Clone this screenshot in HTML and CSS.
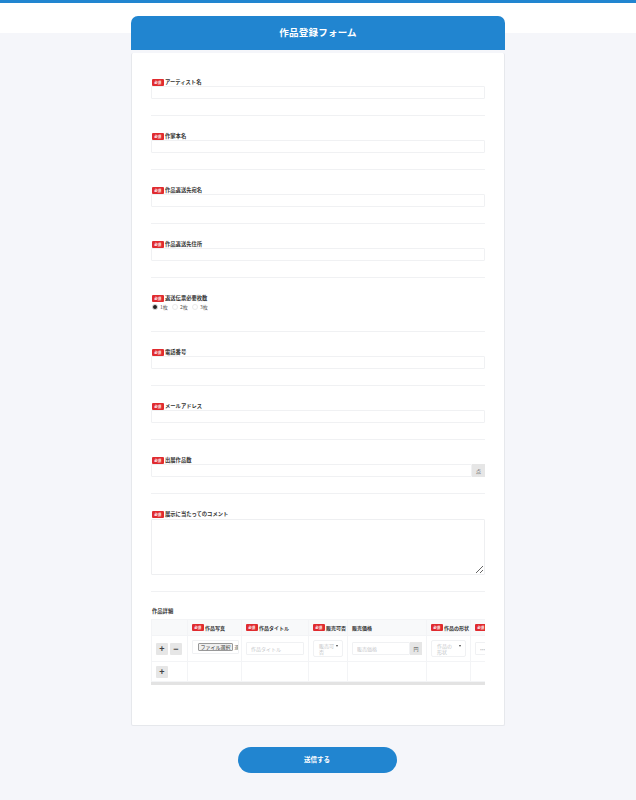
FILE: index.html
```html
<!DOCTYPE html>
<html lang="ja">
<head>
    <meta charset="UTF-8">
    <meta name="viewport" content="width=device-width, initial-scale=1.0">
    <title>作品登録フォーム</title>
    <link rel="stylesheet" href="styles.css">
</head>
<body>
    <div class="container">
        <h1 class="form-title">作品登録フォーム</h1>

        <form class="form-card">
            <div class="field">
                <label class="field-label"><span class="required">必須</span>アーティスト名</label>
                <input class="text-input" type="text">
            </div>
            <div class="field">
                <label class="field-label"><span class="required">必須</span>作家本名</label>
                <input class="text-input" type="text">
            </div>
            <div class="field">
                <label class="field-label"><span class="required">必須</span>作品返送先宛名</label>
                <input class="text-input" type="text">
            </div>
            <div class="field">
                <label class="field-label"><span class="required">必須</span>作品返送先住所</label>
                <input class="text-input" type="text">
            </div>
            <div class="field">
                <label class="field-label"><span class="required">必須</span>返送伝票必要枚数</label>
                <div class="radio-row">
                    <span class="radio-item"><span class="radio checked"></span>1枚</span>
                    <span class="radio-item"><span class="radio"></span>2枚</span>
                    <span class="radio-item"><span class="radio"></span>3枚</span>
                </div>
            </div>
            <div class="field">
                <label class="field-label"><span class="required">必須</span>電話番号</label>
                <input class="text-input" type="text">
            </div>
            <div class="field">
                <label class="field-label"><span class="required">必須</span>メールアドレス</label>
                <input class="text-input" type="text">
            </div>
            <div class="field">
                <label class="field-label"><span class="required">必須</span>出展作品数</label>
                <div class="input-group">
                    <input class="text-input" type="text">
                    <span class="unit">点</span>
                </div>
            </div>
            <div class="field field-tall">
                <label class="field-label"><span class="required">必須</span>展示に当たってのコメント</label>
                <textarea class="text-area"></textarea>
            </div>

            <div class="details">
                <div class="details-title">作品詳細</div>
                <div class="table-wrap">
                    <table class="details-table">
                        <colgroup>
                            <col class="col-ops">
                            <col class="col-photo">
                            <col class="col-title">
                            <col class="col-sale">
                            <col class="col-price">
                            <col class="col-shape">
                            <col class="col-extra">
                        </colgroup>
                        <thead>
                            <tr>
                                <th></th>
                                <th><span class="required">必須</span>作品写真</th>
                                <th><span class="required">必須</span>作品タイトル</th>
                                <th><span class="required">必須</span>販売可否</th>
                                <th>販売価格</th>
                                <th><span class="required">必須</span>作品の形状</th>
                                <th><span class="required">必須</span></th>
                            </tr>
                        </thead>
                        <tbody>
                            <tr class="item-row">
                                <td>
                                    <div class="row-buttons">
                                        <button class="icon-button" type="button">+</button>
                                        <button class="icon-button" type="button">−</button>
                                    </div>
                                </td>
                                <td>
                                    <div class="file-box"><span class="file-button">ファイル選択</span><span class="file-text">選</span></div>
                                </td>
                                <td><input class="cell-input" type="text" placeholder="作品タイトル"></td>
                                <td><div class="cell-select"><span>販売可否</span><i class="caret"></i></div></td>
                                <td>
                                    <div class="price-group">
                                        <input class="cell-input" type="text" placeholder="販売価格">
                                        <span class="price-unit">円</span>
                                    </div>
                                </td>
                                <td><div class="cell-select"><span>作品の形状</span><i class="caret"></i></div></td>
                                <td><input class="cell-input" type="text" placeholder="•••"></td>
                            </tr>
                            <tr class="add-row">
                                <td><button class="icon-button" type="button">+</button></td>
                                <td></td>
                                <td></td>
                                <td></td>
                                <td></td>
                                <td></td>
                                <td></td>
                            </tr>
                        </tbody>
                    </table>
                    <div class="scroll-track"></div>
                </div>
            </div>
        </form>

        <div class="submit-row">
            <button class="submit-button" type="button">送信する</button>
        </div>
    </div>
</body>
</html>
```

FILE: styles.css
```css
:root {
    --primary-color: #2185d0;
    --background: #f5f6fa;
    --border-color: #f0f1f3;
    --required-color: #e02b2f;
    --text-primary: #333;
    --text-muted: #c4c6c9;
    --unit-background: #e6e6e6;
}

* {
    box-sizing: border-box;
}

html, body {
    height: 100%;
}

body {
    margin: 0;
    border-top: 3px solid var(--primary-color);
    background: linear-gradient(#fff 33px, var(--background) 33px);
    color: var(--text-primary);
    font-family: "Noto Sans CJK JP", "Noto Sans", sans-serif;
    font-size: 6px;
}

.container {
    width: 374px;
    margin: 0 auto;
    padding-top: 13px;
}

.form-title {
    margin: 0;
    height: 34px;
    line-height: 33px;
    background-color: var(--primary-color);
    border-radius: 7px 7px 0 0;
    color: #fff;
    font-size: 9.5px;
    font-weight: 700;
    text-align: center;
    letter-spacing: 0.25px;
}

.form-card {
    margin-top: 3px;
    height: 673px;
    padding: 25px 19px 0;
    background-color: #fff;
    border: 1px solid #e6e8ec;
    border-top: none;
    border-radius: 2px;
}

.field {
    height: 38px;
    border-bottom: 1px solid var(--border-color);
}

.field + .field {
    margin-top: 16px;
}

.field-tall.field {
    height: 82px;
}

.field-label {
    display: flex;
    align-items: center;
    height: 8px;
    line-height: 7px;
    padding-left: 1px;
    font-size: 5.3px;
    font-weight: 700;
}

.required {
    display: inline-block;
    flex: none;
    width: 11.5px;
    height: 7px;
    line-height: 7px;
    margin-right: 1.5px;
    background-color: var(--required-color);
    border-radius: 1px;
    color: #fff;
    font-size: 3.5px;
    font-weight: 700;
    text-align: center;
    vertical-align: top;
}

.text-input {
    display: block;
    width: 100%;
    height: 13px;
    margin: 0;
    padding: 0 3px;
    background-color: #fff;
    border: 1px solid var(--border-color);
    border-radius: 1px;
    outline: none;
}

.text-area {
    display: block;
    width: 100%;
    height: 56px;
    margin: 1px 0 0;
    padding: 3px;
    background-color: #fff;
    border: 1px solid #eeeff1;
    border-radius: 1px;
}

.radio-row {
    display: flex;
    margin-top: 1px;
    padding-left: 1px;
    font-size: 5px;
    color: #555;
}

.radio-item {
    display: flex;
    align-items: center;
    gap: 2px;
    width: 20px;
    height: 7px;
}

.radio {
    flex: none;
    width: 6px;
    height: 6px;
    background-color: #fff;
    border: 1px solid #eaeaea;
    border-radius: 50%;
}

.radio.checked {
    background-color: #222;
    border: 1px solid #ddd;
}

.input-group {
    display: flex;
}

.unit {
    flex: none;
    width: 13px;
    height: 13px;
    line-height: 13px;
    background-color: var(--unit-background);
    font-size: 5px;
    color: #555;
    text-align: center;
}

.details {
    padding-top: 15px;
}

.details-title {
    height: 8px;
    line-height: 8px;
    margin-bottom: 4px;
    padding-left: 1px;
    font-size: 5.3px;
    font-weight: 700;
}

.table-wrap {
    width: 334px;
    overflow: hidden;
}

.details-table {
    width: 394px;
    table-layout: fixed;
    border-collapse: collapse;
}

.col-ops { width: 36px; }
.col-photo { width: 54px; }
.col-title { width: 67px; }
.col-sale { width: 39px; }
.col-price { width: 79px; }
.col-shape { width: 44px; }
.col-extra { width: 75px; }

.details-table th,
.details-table td {
    border: 1px solid #f3f4f6;
    padding: 0 4px;
    vertical-align: middle;
}

.details-table th {
    height: 16px;
    background-color: #f8f9fa;
    font-size: 5px;
    font-weight: 700;
    line-height: 7px;
    text-align: left;
    white-space: nowrap;
}

.item-row td {
    height: 26px;
}

.add-row td {
    height: 20px;
}

.row-buttons {
    display: flex;
    gap: 2px;
}

.icon-button {
    display: block;
    width: 12px;
    height: 12px;
    margin: 0;
    padding: 0;
    background-color: #e6e6e6;
    border: none;
    border-radius: 1px;
    color: #444;
    font-family: "Liberation Sans", sans-serif;
    font-size: 9px;
    font-weight: 700;
    line-height: 12px;
    text-align: center;
}

.file-box {
    display: flex;
    align-items: center;
    width: 47px;
    height: 14px;
    padding-left: 5px;
    margin-top: -4px;
    border: 1px solid var(--border-color);
    border-radius: 1px;
    font-size: 5px;
    white-space: nowrap;
    overflow: hidden;
}

.file-button {
    flex: none;
    height: 8px;
    line-height: 6px;
    padding: 0 1.5px;
    margin-right: 1.5px;
    background-color: #efefef;
    border: 1px solid #999;
    border-radius: 1px;
}

.file-text {
    flex: none;
    color: #555;
}

.cell-input {
    display: block;
    width: 100%;
    height: 13px;
    margin: 0;
    padding: 0 4px;
    border: 1px solid var(--border-color);
    border-radius: 1px;
    font-family: inherit;
    font-size: 5px;
}

.cell-input::placeholder {
    color: var(--text-muted);
}

.cell-select {
    display: flex;
    justify-content: space-between;
    width: 100%;
    height: 17px;
    padding: 2px 4px 0 5px;
    border: 1px solid var(--border-color);
    border-radius: 2px;
    color: var(--text-muted);
    font-size: 5px;
    line-height: 6px;
}

.cell-select span {
    width: 15px;
}

.caret {
    flex: none;
    width: 0;
    height: 0;
    margin-top: 2px;
    border-left: 1.5px solid transparent;
    border-right: 1.5px solid transparent;
    border-top: 2px solid #444;
}

.price-group {
    display: flex;
}

.price-group .cell-input {
    flex: 1;
    min-width: 0;
}

.price-unit {
    flex: none;
    width: 12px;
    height: 13px;
    line-height: 13px;
    background-color: var(--unit-background);
    font-size: 5px;
    color: #555;
    text-align: center;
}

.scroll-track {
    height: 3px;
    background-color: #e3e3e3;
}

.submit-row {
    display: flex;
    justify-content: center;
    padding: 21px 2px 0 0;
}

.submit-button {
    width: 159px;
    height: 26px;
    padding: 0 0 2px;
    background-color: var(--primary-color);
    border: none;
    border-radius: 13px;
    color: #fff;
    font-family: inherit;
    font-size: 6.5px;
    font-weight: 700;
}
```
